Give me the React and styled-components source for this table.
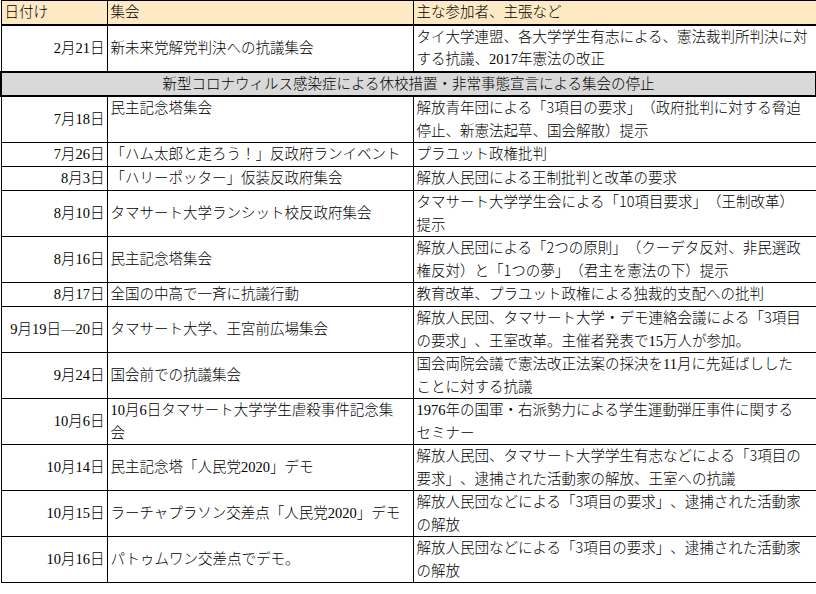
import React from "react";
import styled, { createGlobalStyle } from "styled-components";

const Global = createGlobalStyle`
  html, body { margin: 0; padding: 0; background: #fff; }
  body {
    font-family: "Liberation Serif", "Noto Sans CJK JP", serif;
    color: #000;
  }
`;

const Table = styled.table`
  border-collapse: collapse;
  table-layout: fixed;
  width: 815px;
  font-size: 14.5px;
  line-height: 22.5px;
  text-spacing-trim: space-all;
`;

const Row = styled.tr`
  height: ${(p) => (p.$lines === 2 ? "46px" : "24px")};
  & > td, & > th {
    border-bottom: ${(p) => (p.$thick ? "2px" : "1px")} solid #000;
  }
`;

const cellBase = `
  border: 1px solid #000;
  padding: 0 3px;
  white-space: nowrap;
  overflow: hidden;
  font-weight: 300;
`;

const HeadCell = styled.th`
  ${cellBase}
  background: #fde9c4;
  text-align: left;
  vertical-align: middle;
`;

const DateCell = styled.td`
  ${cellBase}
  text-align: right;
  vertical-align: middle;
  padding-right: 2px;
`;

const EventCell = styled.td`
  ${cellBase}
  text-align: left;
  vertical-align: ${(p) => (p.$top ? "top" : "middle")};
`;

const InfoCell = styled.td`
  ${cellBase}
  text-align: left;
  vertical-align: middle;
`;

const SectionCell = styled.td`
  ${cellBase}
  border: 2px solid #000;
  background: #d9d9d9;
  text-align: center;
  vertical-align: middle;
`;

const Sans = styled.span`
  font-family: "Noto Sans CJK JP", sans-serif;
  line-height: 1;
`;

const rows = [
  {
    date: "7月18日",
    event: "民主記念塔集会",
    top: true,
    info: [
      <>解放青年団による「<Sans>3</Sans>項目の要求」（政府批判に対する脅迫</>,
      "停止、新憲法起草、国会解散）提示",
    ],
  },
  { date: "7月26日", event: "「ハム太郎と走ろう！」反政府ランイベント", info: ["プラユット政権批判"] },
  { date: "8月3日", event: "「ハリーポッター」仮装反政府集会", info: ["解放人民団による王制批判と改革の要求"] },
  {
    date: "8月10日",
    event: "タマサート大学ランシット校反政府集会",
    info: [<>タマサート大学学生会による「<Sans>10</Sans>項目要求」（王制改革）</>, "提示"],
  },
  {
    date: "8月16日",
    event: "民主記念塔集会",
    info: [
      <>解放人民団による「<Sans>2</Sans>つの原則」（クーデタ反対、非民選政</>,
      <>権反対）と「<Sans>1</Sans>つの夢」（君主を憲法の下）提示</>,
    ],
  },
  { date: "8月17日", event: "全国の中高で一斉に抗議行動", info: ["教育改革、プラユット政権による独裁的支配への批判"] },
  {
    date: "9月19日—20日",
    event: "タマサート大学、王宮前広場集会",
    info: [
      <>解放人民団、タマサート大学・デモ連絡会議による「<Sans>3</Sans>項目</>,
      "の要求」、王室改革。主催者発表で15万人が参加。",
    ],
  },
  {
    date: "9月24日",
    event: "国会前での抗議集会",
    info: ["国会両院会議で憲法改正法案の採決を11月に先延ばしした", "ことに対する抗議"],
  },
  {
    date: "10月6日",
    event: ["10月6日タマサート大学学生虐殺事件記念集", "会"],
    info: ["1976年の国軍・右派勢力による学生運動弾圧事件に関する", "セミナー"],
  },
  {
    date: "10月14日",
    event: "民主記念塔「人民党2020」デモ",
    info: [
      <>解放人民団、タマサート大学学生有志などによる「<Sans>3</Sans>項目の</>,
      "要求」、逮捕された活動家の解放、王室への抗議",
    ],
  },
  {
    date: "10月15日",
    event: "ラーチャプラソン交差点「人民党2020」デモ",
    info: [<>解放人民団などによる「<Sans>3</Sans>項目の要求」、逮捕された活動家</>, "の解放"],
  },
  {
    date: "10月16日",
    event: "パトゥムワン交差点でデモ。",
    info: [<>解放人民団などによる「<Sans>3</Sans>項目の要求」、逮捕された活動家</>, "の解放"],
  },
];

const Lines = ({ items }) => {
  const list = Array.isArray(items) ? items : [items];
  return list.map((l, i) => (
    <React.Fragment key={i}>
      {i > 0 && <br />}
      {l}
    </React.Fragment>
  ));
};

export default function App() {
  return (
    <>
      <Global />
      <Table>
        <colgroup>
          <col style={{ width: 106 }} />
          <col style={{ width: 306 }} />
          <col style={{ width: 403 }} />
        </colgroup>
        <thead>
          <Row $thick>
            <HeadCell>日付け</HeadCell>
            <HeadCell>集会</HeadCell>
            <HeadCell>主な参加者、主張など</HeadCell>
          </Row>
        </thead>
        <tbody>
          <Row $lines={2} $thick>
            <DateCell>2月21日</DateCell>
            <EventCell>新未来党解党判決への抗議集会</EventCell>
            <InfoCell>
              タイ大学連盟、各大学学生有志による、憲法裁判所判決に対
              <br />
              する抗議、2017年憲法の改正
            </InfoCell>
          </Row>
          <Row $thick>
            <SectionCell colSpan={3}>
              新型コロナウィルス感染症による休校措置・非常事態宣言による集会の停止
            </SectionCell>
          </Row>
          {rows.map((r) => {
            const lines =
              (Array.isArray(r.info) && r.info.length > 1) ||
              (Array.isArray(r.event) && r.event.length > 1)
                ? 2
                : 1;
            return (
              <Row key={r.date} $lines={lines}>
                <DateCell>{r.date}</DateCell>
                <EventCell $top={r.top}>
                  <Lines items={r.event} />
                </EventCell>
                <InfoCell>
                  <Lines items={r.info} />
                </InfoCell>
              </Row>
            );
          })}
        </tbody>
      </Table>
    </>
  );
}
